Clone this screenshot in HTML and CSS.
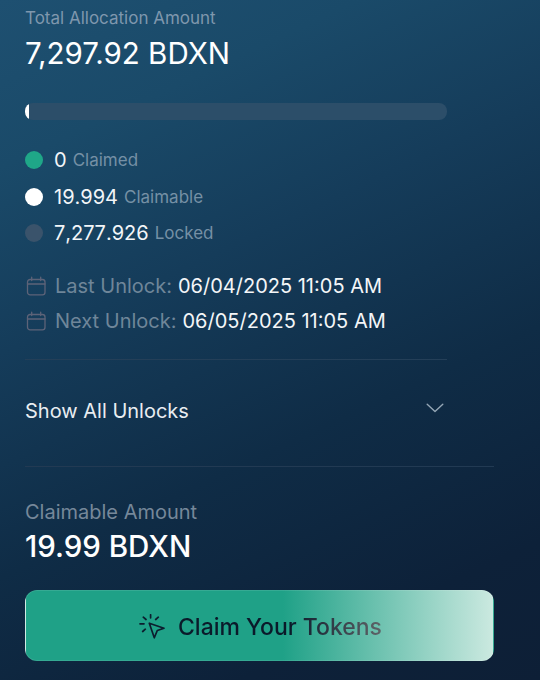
FILE: index.html
```html
<!DOCTYPE html>
<html lang="en">
<head>
<meta charset="utf-8">
<title>Token Allocation</title>
<link rel="stylesheet" href="styles.css">
</head>
<body>
<main class="panel">
  <section class="upper">
    <p class="label">Total Allocation Amount</p>
    <p class="total">7,297.92 BDXN</p>
    <div class="bar"><div class="bar-fill"></div></div>
    <ul class="legend">
      <li class="legend-row"><span class="dot dot-green"></span><span class="num">0</span><span class="cap">Claimed</span></li>
      <li class="legend-row"><span class="dot dot-white"></span><span class="num">19.994</span><span class="cap">Claimable</span></li>
      <li class="legend-row"><span class="dot dot-slate"></span><span class="num">7,277.926</span><span class="cap">Locked</span></li>
    </ul>
    <div class="dates">
      <div class="date-row">
        <svg class="cal" viewBox="0 0 21 21" fill="none" stroke="currentColor" stroke-width="1.3" stroke-linecap="round" stroke-linejoin="round"><rect x="2.5" y="3.5" width="17.5" height="15.3" rx="2.6"/><path d="M2.5 8h17.5M6.7 1.2v3.4M15.7 1.2v3.4"/></svg>
        <span class="date-key">Last Unlock:</span><span class="date-val">06/04/2025 11:05 AM</span>
      </div>
      <div class="date-row">
        <svg class="cal" viewBox="0 0 21 21" fill="none" stroke="currentColor" stroke-width="1.3" stroke-linecap="round" stroke-linejoin="round"><rect x="2.5" y="3.5" width="17.5" height="15.3" rx="2.6"/><path d="M2.5 8h17.5M6.7 1.2v3.4M15.7 1.2v3.4"/></svg>
        <span class="date-key">Next Unlock:</span><span class="date-val">06/05/2025 11:05 AM</span>
      </div>
    </div>
    <div class="toggle">
      <span>Show All Unlocks</span>
      <svg class="chev" viewBox="0 0 18 10" fill="none" stroke="currentColor" stroke-width="1.4" stroke-linecap="round" stroke-linejoin="round"><path d="M1.2 1.2 9 8.4l7.8-7.2"/></svg>
    </div>
  </section>
  <section class="lower">
    <p class="claim-label">Claimable Amount</p>
    <p class="claim-value">19.99 BDXN</p>
    <button class="cta" type="button">
      <svg class="cta-icon" viewBox="0 0 26 26" fill="none" stroke="currentColor" stroke-width="1.7" stroke-linecap="round" stroke-linejoin="round"><path d="M10.3 9.2 25 14.2 18.3 16.5 15.3 23.8Z"/><path d="M11.6 .8v3M4.3 3.2 7 5.5M19.3 3.2 16.7 5.5M1 9.8h4M3.7 17.5l2.6-2.3"/></svg>
      <span class="cta-text">Claim Your Tokens</span>
    </button>
  </section>
</main>
</body>
</html>
```
FILE: styles.css
```css
* { box-sizing: border-box; }
html, body { margin: 0; height: 100%; }
body {
  font-family: Inter, "Liberation Sans", sans-serif;
  background: #0e2138;
  overflow: hidden;
}
p { margin: 0; }
.panel {
  width: 540px;
  height: 680px;
  padding: 0 46px 0 25px;
  background: linear-gradient(155deg, #1e5071 0%, #1a4a69 18%, #153c5a 38%, #0f2c46 62%, #0d2139 85%, #0d1f36 100%);
  color: #fff;
}
.upper { width: 422px; padding-top: 8px; }
.label { font-size: 17px; line-height: 20px; color: #7f97ad; }
.total { margin-top: 9px; font-size: 29.5px; line-height: 32px; font-weight: 400; }
.bar {
  margin-top: 34px;
  height: 17px;
  border-radius: 8px;
  background: #2c4e69;
  overflow: hidden;
}
.bar-fill { width: 4px; height: 100%; background: #fff; border-radius: 8px 0 0 8px; }
.legend { list-style: none; margin: 22px 0 0; padding: 0; }
.legend-row { display: flex; align-items: center; height: 36.5px; }
.dot { width: 18px; height: 18px; border-radius: 50%; margin-right: 11px; flex: none; }
.dot-green { background: #1fa788; }
.dot-white { background: #fff; }
.dot-slate { background: #3a536b; }
.num { font-size: 20px; color: #f2f5f8; margin-right: 6px; font-kerning: none; }
.cap { font-size: 17px; color: #7590a5; }
.dates { margin-top: 17px; }
.date-row { display: flex; align-items: center; height: 35px; font-size: 20px; }
.cal { width: 21px; height: 21px; color: #5d6378; margin-right: 9px; flex: none; }
.date-key { color: #6f8699; margin-right: 6px; }
.date-val { color: #f4f6f8; }
.toggle {
  margin-top: 20px;
  border-top: 1px solid #243f58;
  height: 107px;
  padding: 39px 3px 0 0;
  display: flex;
  justify-content: space-between;
  align-items: flex-start;
  font-size: 20px;
  line-height: 24px;
  color: #e9edf1;
  font-weight: 400;
}
.chev { width: 18px; height: 10px; margin-top: 4px; color: #95a7b6; }
.lower { border-top: 1px solid #223a53; width: 469px; padding-top: 33px; }
.claim-label { font-size: 20px; line-height: 24px; color: #76889a; }
.claim-value { margin-top: 5px; font-size: 29.5px; line-height: 34px; font-weight: 500; }
.cta {
  margin-top: 27px;
  width: 469px;
  height: 71px;
  border: 1px solid rgba(255, 255, 255, 0.1);
  border-radius: 12px;
  background: linear-gradient(90deg, #1fa187 0%, #1fa187 55%, #cbe9e0 100%);
  display: flex;
  align-items: center;
  justify-content: center;
  gap: 13px;
  color: #0c1d2e;
  font-family: inherit;
  padding: 4px 0 0 2px;
}
.cta-icon { width: 26px; height: 26px; flex: none; }
.cta-text {
  font-size: 23px;
  font-weight: 500;
  background: linear-gradient(90deg, #0a1a2a 0%, #0a1a2a 55%, #5f6468 100%);
  -webkit-background-clip: text;
  background-clip: text;
  color: transparent;
}
```
